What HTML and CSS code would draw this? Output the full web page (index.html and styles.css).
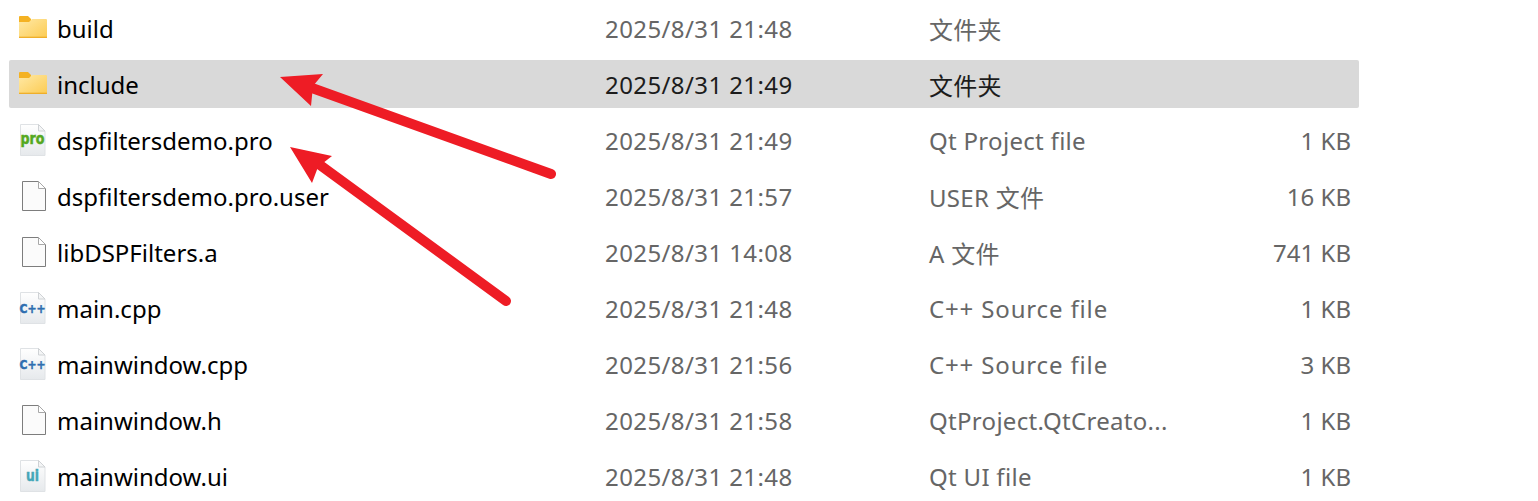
FILE: index.html
```html
<!DOCTYPE html>
<html lang="zh-CN">
<head>
  <meta charset="UTF-8" />
  <meta name="viewport" content="width=device-width, initial-scale=1.0" />
  <title>dspfiltersdemo</title>
  <link rel="stylesheet" href="styles.css">
</head>
<body>

  <svg class="icon-defs" width="0" height="0" aria-hidden="true">
    <defs>
      <linearGradient id="folderFill" x1="0" y1="0" x2="1" y2="1">
        <stop offset="0" stop-color="#ffe9a6" />
        <stop offset="1" stop-color="#fccb52" />
      </linearGradient>
      <linearGradient id="pageFill" x1="0" y1="0" x2="0" y2="1">
        <stop offset="0" stop-color="#ffffff" />
        <stop offset="1" stop-color="#e6e9ec" />
      </linearGradient>
      <symbol id="i-folder" viewBox="0 0 32 32">
        <path d="M2 5a1 1 0 0 1 1-1h8l3 3v3H2z" fill="#f4b223" />
        <path d="M2 10h10l3-3h14a1 1 0 0 1 1 1v17a1 1 0 0 1-1 1H3a1 1 0 0 1-1-1z" fill="url(#folderFill)" />
        <path d="M2 25.3h28" stroke="#eeab24" stroke-width="1.2" />
      </symbol>
      <symbol id="i-doc" viewBox="0 0 32 32">
        <path d="M5.5 1.5h16l7 7v22h-23z" fill="#fbfbfb" stroke="#7d7d7d" />
        <path d="M21.5 1.5v7h7z" fill="#fff" stroke="#a8a8a8" />
      </symbol>
      <symbol id="i-page" viewBox="0 0 32 32">
        <path d="M3.5 .5h18l6.5 6.5v24.500h-24.500z" fill="url(#pageFill)" stroke="#dfe2e5" />
        <path d="M21.500 .5v6.500h6.500z" fill="#f4f5f6" stroke="#cfd2d5" />
      </symbol>
    </defs>
  </svg>

  <main class="file-list">

    <div class="row">
      <svg class="icon"><use href="#i-folder" /></svg>
      <span class="name">build</span>
      <span class="date">2025/8/31 21:48</span>
      <span class="type">文件夹</span>
      <span class="size"></span>
    </div>

    <div class="row selected">
      <svg class="icon"><use href="#i-folder" /></svg>
      <span class="name">include</span>
      <span class="date">2025/8/31 21:49</span>
      <span class="type">文件夹</span>
      <span class="size"></span>
    </div>

    <div class="row">
      <svg class="icon" viewBox="0 0 32 32">
        <use href="#i-page" />
        <text class="badge badge-pro" x="3.500" y="20" textLength="24" lengthAdjust="spacingAndGlyphs">pro</text>
      </svg>
      <span class="name">dspfiltersdemo.pro</span>
      <span class="date">2025/8/31 21:49</span>
      <span class="type">Qt Project file</span>
      <span class="size">1 KB</span>
    </div>

    <div class="row">
      <svg class="icon"><use href="#i-doc" /></svg>
      <span class="name">dspfiltersdemo.pro.user</span>
      <span class="date">2025/8/31 21:57</span>
      <span class="type">USER 文件</span>
      <span class="size">16 KB</span>
    </div>

    <div class="row">
      <svg class="icon"><use href="#i-doc" /></svg>
      <span class="name">libDSPFilters.a</span>
      <span class="date">2025/8/31 14:08</span>
      <span class="type">A 文件</span>
      <span class="size">741 KB</span>
    </div>

    <div class="row">
      <svg class="icon" viewBox="0 0 32 32">
        <use href="#i-page" />
        <text class="badge badge-cpp" x="2.500" y="21" textLength="26" lengthAdjust="spacingAndGlyphs">C++</text>
      </svg>
      <span class="name">main.cpp</span>
      <span class="date">2025/8/31 21:48</span>
      <span class="type cpp">C++ Source file</span>
      <span class="size">1 KB</span>
    </div>

    <div class="row">
      <svg class="icon" viewBox="0 0 32 32">
        <use href="#i-page" />
        <text class="badge badge-cpp" x="2.500" y="21" textLength="26" lengthAdjust="spacingAndGlyphs">C++</text>
      </svg>
      <span class="name">mainwindow.cpp</span>
      <span class="date">2025/8/31 21:56</span>
      <span class="type cpp">C++ Source file</span>
      <span class="size">3 KB</span>
    </div>

    <div class="row">
      <svg class="icon"><use href="#i-doc" /></svg>
      <span class="name">mainwindow.h</span>
      <span class="date">2025/8/31 21:58</span>
      <span class="type">QtProject.QtCreato...</span>
      <span class="size">1 KB</span>
    </div>

    <div class="row">
      <svg class="icon" viewBox="0 0 32 32">
        <use href="#i-page" />
        <text class="badge badge-ui" x="9" y="21" textLength="13" lengthAdjust="spacingAndGlyphs">ui</text>
      </svg>
      <span class="name">mainwindow.ui</span>
      <span class="date">2025/8/31 21:48</span>
      <span class="type">Qt UI file</span>
      <span class="size">1 KB</span>
    </div>

  </main>

  <!-- annotation arrows drawn on top of the list -->
  <svg class="arrows" viewBox="0 0 1538 501" aria-hidden="true">
    <path class="arrow-line" d="M551 174L312 88" />
    <path class="arrow-head" d="M280 77L323 74L313 86L311 106z" />
    <path class="arrow-line" d="M506 301L320 165" />
    <path class="arrow-head" d="M290 147L332 156L318 167L312 183z" />
  </svg>

</body>
</html>
```

FILE: styles.css
```css
html, body {
  margin: 0;
  padding: 0;
  height: 501px;
  overflow: hidden;
  background: #fff;
  font-family: "Noto Sans", "Noto Sans CJK SC", sans-serif;
}

body {
  position: relative;
}

.icon-defs {
  position: absolute;
}

.file-list {
  display: flex;
  flex-direction: column;
  gap: 8px;
  width: 1350px;
  margin-left: 9px;
  padding-top: 4px;
}

.row {
  display: flex;
  align-items: center;
  flex: none;
  height: 48px;
  font-size: 24px;
  color: #666;
  border-radius: 2px;
  white-space: nowrap;
}

.row.selected {
  background: #d9d9d9;
  color: #1c1c1c;
}

.icon {
  flex: none;
  width: 32px;
  height: 32px;
  margin-left: 8px;
  margin-right: 8px;
  overflow: visible;
}

.name {
  width: 548px;
  color: #000;
}

.date {
  width: 324px;
  letter-spacing: 0.4px;
}

.type {
  width: 250px;
  letter-spacing: 0.3px;
}

.type.cpp {
  letter-spacing: 0.85px;
}

.size {
  flex: 1;
  padding-right: 8px;
  text-align: right;
}

.badge {
  font-family: "DejaVu Sans", sans-serif;
  font-weight: bold;
  stroke-width: 0.5px;
}

.badge-pro {
  font-size: 15px;
  fill: #55a81f;
  stroke: #55a81f;
}

.badge-cpp {
  font-size: 13px;
  fill: #2f6eb0;
  stroke: #2f6eb0;
}

.badge-ui {
  font-size: 16px;
  fill: #45a7b8;
  stroke: #45a7b8;
}

.arrows {
  position: absolute;
  left: 0;
  top: 0;
  width: 1538px;
  height: 501px;
}

.arrow-line {
  fill: none;
  stroke: #ee1c25;
  stroke-width: 10;
  stroke-linecap: round;
}

.arrow-head {
  fill: #ee1c25;
}
```
